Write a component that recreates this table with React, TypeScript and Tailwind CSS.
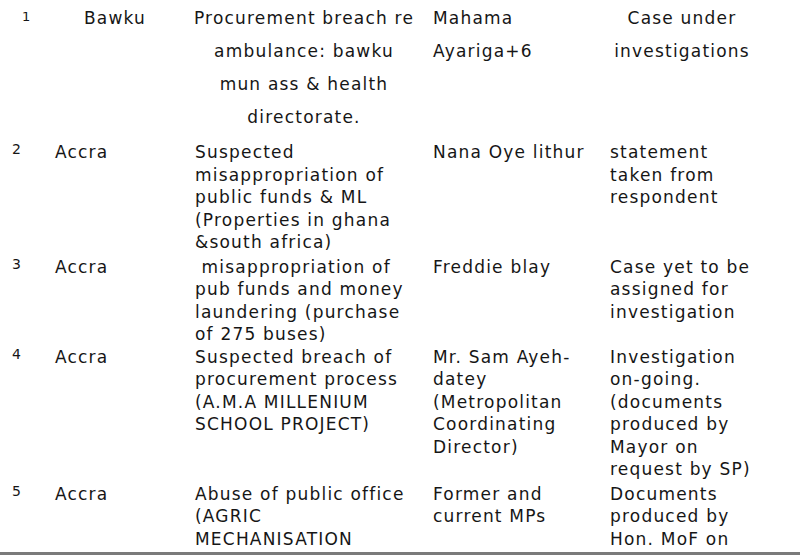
const font = { fontFamily: '"DejaVu Sans", Verdana, sans-serif' };

type Row = {
  no: string;
  place: string;
  desc: string[];
  who: string[];
  status: string[];
  gap: string;
};

const rows: Row[] = [
  {
    no: "2",
    place: "Accra",
    desc: ["Suspected", "misappropriation of", "public funds & ML", "(Properties in ghana", "&south africa)"],
    who: ["Nana Oye lithur"],
    status: ["statement", "taken from", "respondent"],
    gap: "mt-[7px]",
  },
  {
    no: "3",
    place: "Accra",
    desc: ["\u00a0misappropriation of", "pub funds and money", "laundering (purchase", "of 275 buses)"],
    who: ["Freddie blay"],
    status: ["Case yet to be", "assigned for", "investigation"],
    gap: "mt-[2px]",
  },
  {
    no: "4",
    place: "Accra",
    desc: ["Suspected breach of", "procurement process", "(A.M.A MILLENIUM", "SCHOOL PROJECT)"],
    who: ["Mr. Sam Ayeh-", "datey", "(Metropolitan", "Coordinating", "Director)"],
    status: ["Investigation", "on-going.", "(documents", "produced by", "Mayor on", "request by SP)"],
    gap: "mt-0",
  },
  {
    no: "5",
    place: "Accra",
    desc: ["Abuse of public office", "(AGRIC", "MECHANISATION"],
    who: ["Former and", "current MPs"],
    status: ["Documents", "produced by", "Hon. MoF on"],
    gap: "mt-[2px]",
  },
];

function Lines({ items }: { items: string[] }) {
  return (
    <>
      {items.map((t, i) => (
        <div key={i} className="whitespace-pre">
          {t}
        </div>
      ))}
    </>
  );
}

export default function App() {
  return (
    <div className="w-[800px] h-[556px] bg-white text-[#161616] overflow-hidden flex flex-col" style={font}>
      <div className="pt-[2px] flex text-[17px] tracking-[1.2px] leading-[33px]">
        <div className="w-[55px] pl-[22px] pt-[7px] text-[13px] tracking-normal leading-[16px]">1</div>
        <div className="w-[120px] text-center">Bawku</div>
        <div className="w-[258px] text-center">
          <Lines items={["Procurement breach re", "ambulance: bawku", "mun ass & health", "directorate."]} />
        </div>
        <div className="w-[177px]">
          <Lines items={["Mahama", "Ayariga+6"]} />
        </div>
        <div className="w-[144px] text-center">
          <Lines items={["Case under", "investigations"]} />
        </div>
      </div>

      {rows.map((r) => (
        <div key={r.no} className={`flex text-[17px] tracking-[1.2px] leading-[22.5px] ${r.gap}`}>
          <div className="w-[55px] pl-[12px] text-[14px] tracking-normal leading-[16px]">{r.no}</div>
          <div className="w-[140px]">{r.place}</div>
          <div className="w-[238px]">
            <Lines items={r.desc} />
          </div>
          <div className="w-[177px]">
            <Lines items={r.who} />
          </div>
          <div className="flex-1">
            <Lines items={r.status} />
          </div>
        </div>
      ))}

      <div className="flex-1" />
      <div className="h-[3px] bg-[#7a7a7a] mb-[1px]" />
    </div>
  );
}
